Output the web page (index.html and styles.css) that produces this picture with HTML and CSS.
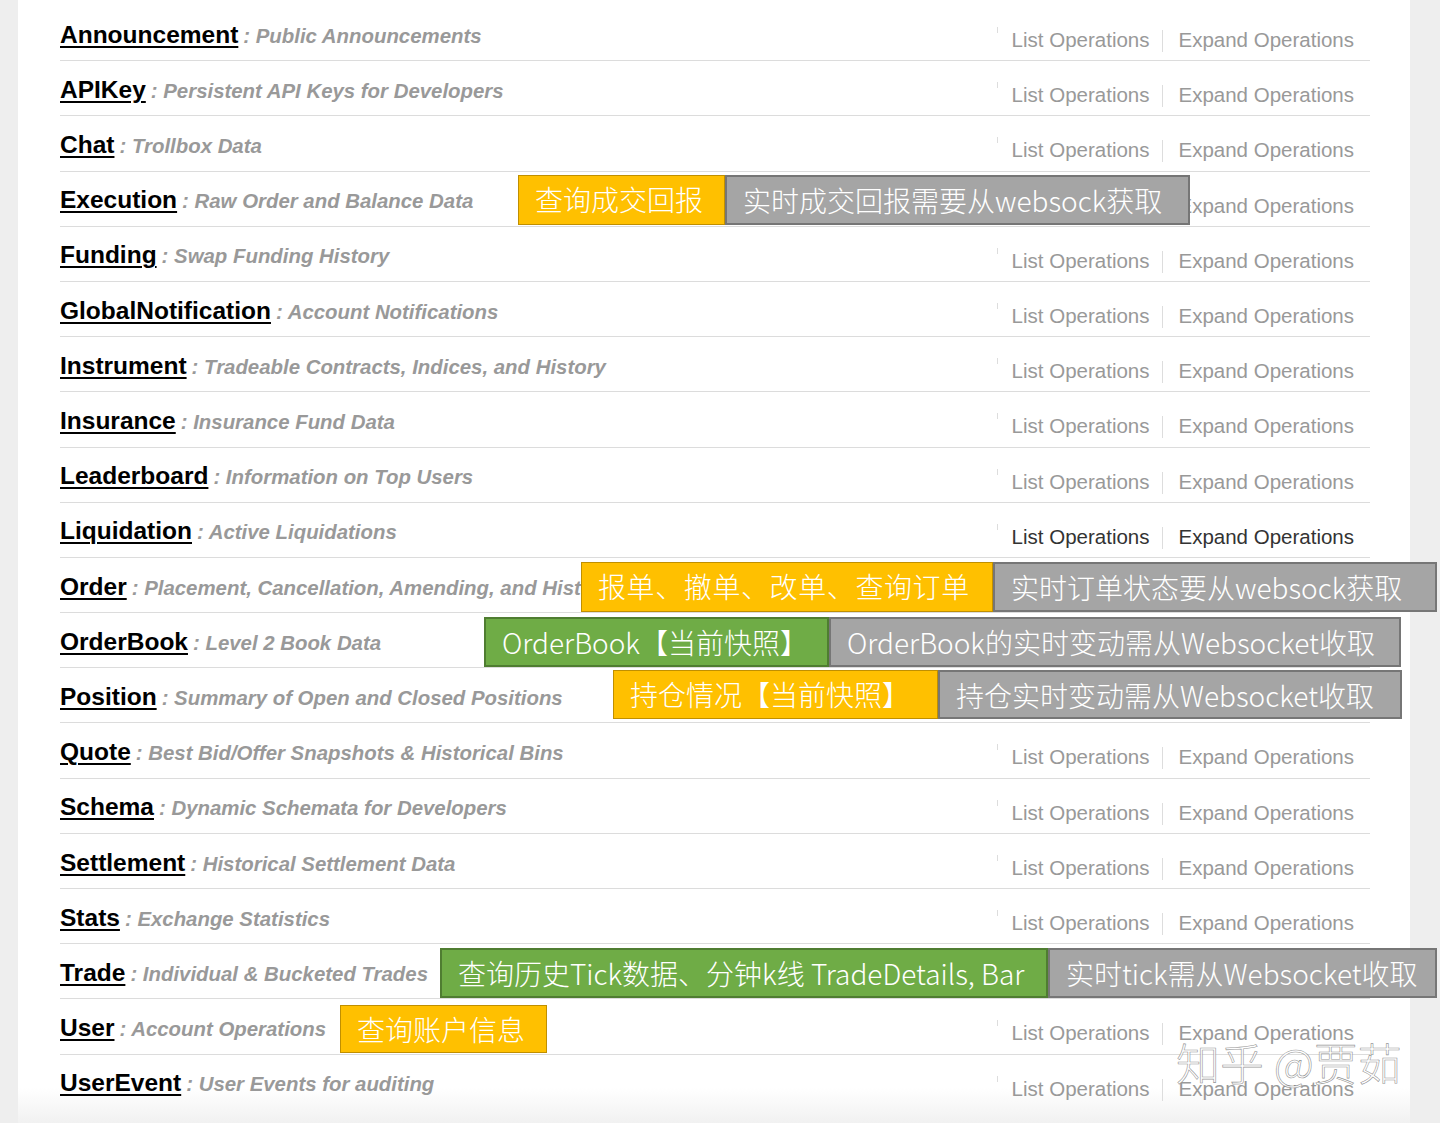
FILE: index.html
```html
<!DOCTYPE html>
<html lang="zh-CN">
<head>
<meta charset="utf-8">
<title>API Resources</title>
<link rel="stylesheet" href="styles.css">
</head>
<body>
<div class="page">
  <div class="panel">
    <div class="row"><div class="heading"><a class="name">Announcement</a><span class="desc">: Public Announcements</span></div><ul class="options"><li class="tick"></li><li class="list">List Operations</li><li class="expand">Expand Operations</li></ul></div>
    <div class="row"><div class="heading"><a class="name">APIKey</a><span class="desc">: Persistent API Keys for Developers</span></div><ul class="options"><li class="tick"></li><li class="list">List Operations</li><li class="expand">Expand Operations</li></ul></div>
    <div class="row"><div class="heading"><a class="name">Chat</a><span class="desc">: Trollbox Data</span></div><ul class="options"><li class="tick"></li><li class="list">List Operations</li><li class="expand">Expand Operations</li></ul></div>
    <div class="row"><div class="heading"><a class="name">Execution</a><span class="desc">: Raw Order and Balance Data</span></div><ul class="options"><li class="tick"></li><li class="list">List Operations</li><li class="expand">Expand Operations</li></ul></div>
    <div class="row"><div class="heading"><a class="name">Funding</a><span class="desc">: Swap Funding History</span></div><ul class="options"><li class="tick"></li><li class="list">List Operations</li><li class="expand">Expand Operations</li></ul></div>
    <div class="row"><div class="heading"><a class="name">GlobalNotification</a><span class="desc">: Account Notifications</span></div><ul class="options"><li class="tick"></li><li class="list">List Operations</li><li class="expand">Expand Operations</li></ul></div>
    <div class="row"><div class="heading"><a class="name">Instrument</a><span class="desc">: Tradeable Contracts, Indices, and History</span></div><ul class="options"><li class="tick"></li><li class="list">List Operations</li><li class="expand">Expand Operations</li></ul></div>
    <div class="row"><div class="heading"><a class="name">Insurance</a><span class="desc">: Insurance Fund Data</span></div><ul class="options"><li class="tick"></li><li class="list">List Operations</li><li class="expand">Expand Operations</li></ul></div>
    <div class="row"><div class="heading"><a class="name">Leaderboard</a><span class="desc">: Information on Top Users</span></div><ul class="options"><li class="tick"></li><li class="list">List Operations</li><li class="expand">Expand Operations</li></ul></div>
    <div class="row hover"><div class="heading"><a class="name">Liquidation</a><span class="desc">: Active Liquidations</span></div><ul class="options"><li class="tick"></li><li class="list">List Operations</li><li class="expand">Expand Operations</li></ul></div>
    <div class="row"><div class="heading"><a class="name">Order</a><span class="desc">: Placement, Cancellation, Amending, and History</span></div><ul class="options"><li class="tick"></li><li class="list">List Operations</li><li class="expand">Expand Operations</li></ul></div>
    <div class="row"><div class="heading"><a class="name">OrderBook</a><span class="desc">: Level 2 Book Data</span></div><ul class="options"><li class="tick"></li><li class="list">List Operations</li><li class="expand">Expand Operations</li></ul></div>
    <div class="row"><div class="heading"><a class="name">Position</a><span class="desc">: Summary of Open and Closed Positions</span></div><ul class="options"><li class="tick"></li><li class="list">List Operations</li><li class="expand">Expand Operations</li></ul></div>
    <div class="row"><div class="heading"><a class="name">Quote</a><span class="desc">: Best Bid/Offer Snapshots &amp; Historical Bins</span></div><ul class="options"><li class="tick"></li><li class="list">List Operations</li><li class="expand">Expand Operations</li></ul></div>
    <div class="row"><div class="heading"><a class="name">Schema</a><span class="desc">: Dynamic Schemata for Developers</span></div><ul class="options"><li class="tick"></li><li class="list">List Operations</li><li class="expand">Expand Operations</li></ul></div>
    <div class="row"><div class="heading"><a class="name">Settlement</a><span class="desc">: Historical Settlement Data</span></div><ul class="options"><li class="tick"></li><li class="list">List Operations</li><li class="expand">Expand Operations</li></ul></div>
    <div class="row"><div class="heading"><a class="name">Stats</a><span class="desc">: Exchange Statistics</span></div><ul class="options"><li class="tick"></li><li class="list">List Operations</li><li class="expand">Expand Operations</li></ul></div>
    <div class="row"><div class="heading"><a class="name">Trade</a><span class="desc">: Individual &amp; Bucketed Trades</span></div><ul class="options"><li class="tick"></li><li class="list">List Operations</li><li class="expand">Expand Operations</li></ul></div>
    <div class="row"><div class="heading"><a class="name">User</a><span class="desc">: Account Operations</span></div><ul class="options"><li class="tick"></li><li class="list">List Operations</li><li class="expand">Expand Operations</li></ul></div>
    <div class="row last"><div class="heading"><a class="name">UserEvent</a><span class="desc">: User Events for auditing</span></div><ul class="options"><li class="tick"></li><li class="list">List Operations</li><li class="expand">Expand Operations</li></ul></div>
  </div>

  <div class="note note-exec">
    <div class="box yellow w-exec-a">查询成交回报</div>
    <div class="box gray w-exec-b">实时成交回报需要从websock获取</div>
  </div>
  <div class="note note-order">
    <div class="box yellow spaced w-order-a">报单、撤单、改单、查询订单</div>
    <div class="box gray w-order-b">实时订单状态要从websock获取</div>
  </div>
  <div class="note note-book">
    <div class="box green w-book-a">OrderBook【当前快照】</div>
    <div class="box gray w-book-b">OrderBook的实时变动需从Websocket收取</div>
  </div>
  <div class="note note-pos">
    <div class="box yellow w-pos-a">持仓情况【当前快照】</div>
    <div class="box gray w-pos-b">持仓实时变动需从Websocket收取</div>
  </div>
  <div class="note note-trade">
    <div class="box green w-trade-a">查询历史Tick数据、分钟k线 TradeDetails, Bar</div>
    <div class="box gray w-trade-b">实时tick需从Websocket收取</div>
  </div>
  <div class="note note-user">
    <div class="box yellow w-user-a">查询账户信息</div>
  </div>

  <div class="watermark">知乎 @贾茹</div>
</div>
</body>
</html>
```

FILE: styles.css
```css
html, body {
  margin: 0;
  padding: 0;
  background: #eeeeee;
}

.page {
  position: relative;
  width: 1440px;
  height: 1123px;
  overflow: hidden;
  background: #eeeeee;
  font-family: "Liberation Sans", Arial, sans-serif;
}

.panel {
  margin-left: 18px;
  width: 1392px;
  height: 1123px;
  box-sizing: border-box;
  padding: 6px 40px 0 42px;
  background: linear-gradient(to bottom, #ffffff 0, #ffffff 1088px, #f1f1f1 1123px);
}

.row {
  display: flex;
  justify-content: space-between;
  align-items: flex-start;
  height: 55.2px;
  box-sizing: border-box;
  border-bottom: 1px solid #dcdcdc;
}

.row.last {
  border-bottom: none;
}

.heading {
  padding-top: 14.7px;
  line-height: 28px;
  white-space: nowrap;
}

.name {
  font-size: 24.5px;
  font-weight: bold;
  color: #000;
  text-decoration: underline;
  text-decoration-thickness: 1.5px;
  text-underline-offset: 3px;
}

.desc {
  margin-left: 5px;
  font-size: 20.4px;
  font-weight: bold;
  font-style: italic;
  color: #999999;
}

.options {
  display: flex;
  align-items: flex-start;
  list-style: none;
  margin: 0 16px 0 0;
  padding: 24px 0 0 0;
  font-size: 20.5px;
  line-height: 19px;
  color: #999;
  white-space: nowrap;
}

.options .tick {
  width: 1px;
  height: 6px;
  margin-top: -3px;
  margin-right: 14px;
  background: #dddddd;
}

.options .list {
  padding: 0 13px 3px 0;
}

.options .expand {
  padding: 0 0 3px 15px;
  border-left: 1px solid #dddddd;
}

.row.hover .options {
  color: #333;
}

/* annotation overlays */
.note {
  position: absolute;
  display: flex;
  height: 50px;
}

.box {
  box-sizing: border-box;
  height: 100%;
  padding-left: 16px;
  font-family: "Noto Sans CJK SC", "Noto Sans", sans-serif;
  font-weight: 300;
  font-size: 28px;
  line-height: 46px;
  color: #ffffff;
  white-space: nowrap;
  overflow: hidden;
}

.box.yellow {
  background: #ffc000;
  border: 1px solid #c08f00;
}

.box.gray {
  background: #a5a5a5;
  border: 2px solid #767676;
}

.box.green {
  background: #6fac46;
  border: 2px solid #4f7d31;
}

.box.spaced {
  letter-spacing: 0.6px;
}

.note-exec { left: 518px; top: 175px; }
.w-exec-a { width: 207px; }
.w-exec-b { width: 465px; }

.note-order { left: 581px; top: 562px; }
.w-order-a { width: 412px; }
.w-order-b { width: 444px; }

.note-book { left: 484px; top: 617px; }
.w-book-a { width: 345px; }
.w-book-b { width: 572px; }

.note-pos { left: 613px; top: 670px; height: 49px; }
.w-pos-a { width: 325px; }
.w-pos-b { width: 464px; }

.note-trade { left: 440px; top: 948px; }
.w-trade-a { width: 608px; }
.w-trade-b { width: 389px; }

.note-user { left: 340px; top: 1005px; height: 48px; }
.w-user-a { width: 207px; }

.watermark {
  position: absolute;
  left: 1176px;
  top: 1036px;
  font-family: "Noto Sans CJK SC", sans-serif;
  font-weight: 300;
  font-size: 44px;
  line-height: 52px;
  color: rgba(255, 255, 255, 0.82);
  -webkit-text-stroke: 0.6px rgba(110, 110, 110, 0.75);
  white-space: nowrap;
}
```
